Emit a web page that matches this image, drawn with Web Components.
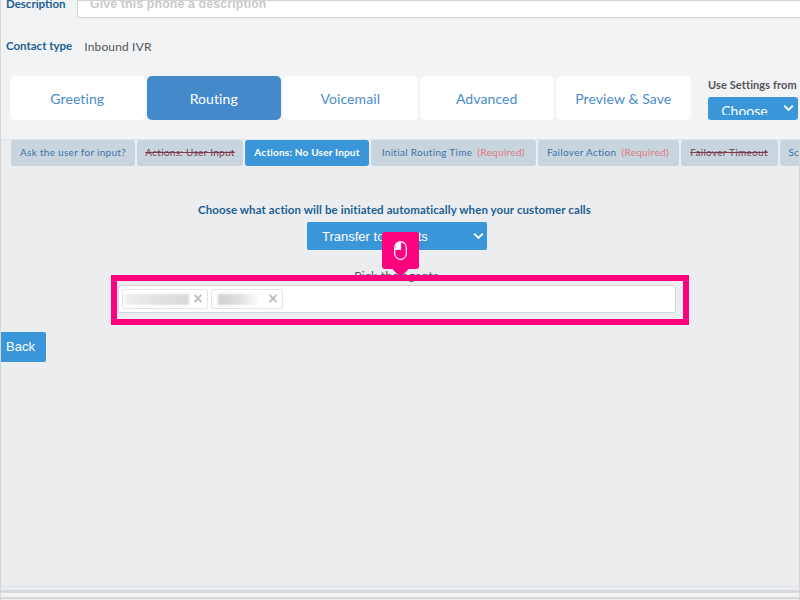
<!DOCTYPE html>
<html>
<head>
<meta charset="utf-8">
<style>
  html, body { margin: 0; padding: 0; }
  body {
    width: 800px;
    height: 600px;
    overflow: hidden;
    position: relative;
    background: #f2f3f5;
    font-family: "Lato", "Liberation Sans", sans-serif;
  }
</style>
</head>
<body>
<form-head></form-head>
<step-tabs>
  <step-tab>Greeting</step-tab>
  <step-tab active>Routing</step-tab>
  <step-tab>Voicemail</step-tab>
  <step-tab>Advanced</step-tab>
  <step-tab>Preview &amp; Save</step-tab>
</step-tabs>
<routing-panel>
  <sub-tabs>
    <sub-tab style="width:124px">Ask the user for input?</sub-tab>
    <sub-tab style="width:106px" state="off">Actions: User Input</sub-tab>
    <sub-tab style="width:124px" state="on">Actions: No User Input</sub-tab>
    <sub-tab style="width:164.500px" required>Initial Routing Time</sub-tab>
    <sub-tab style="width:141px" required>Failover Action</sub-tab>
    <sub-tab style="width:97px" state="off">Failover Timeout</sub-tab>
    <sub-tab style="width:60px">Schedule</sub-tab>
  </sub-tabs>
  <agent-picker></agent-picker>
</routing-panel>
<guide-highlight></guide-highlight>

<script>
const chevron = `<svg width="11" height="8" viewBox="0 0 11 8"><path d="M1.2 1.6 5.5 5.9 9.8 1.6" fill="none" stroke="#fff" stroke-width="2"/></svg>`;

class FormHead extends HTMLElement {
  constructor() {
    super();
    this.attachShadow({ mode: "open" }).innerHTML = `
      <style>
        :host { display: block; height: 76px; border-left: 1px solid #d5d6d8; box-sizing: border-box; }
        .row { display: flex; align-items: flex-end; height: 18px; padding-left: 5px; }
        .label { width: 71px; font-size: 11.5px; font-weight: 700; color: #1c5f94; line-height: 14px; }
        .desc .label { padding-bottom: 7px; }
        .input {
          flex: 1; height: 18px; box-sizing: border-box;
          background: #fff; border: 1px solid #d3d4d6; border-right: 0; border-radius: 0 0 0 3px;
          font: 700 12.300px "Liberation Sans", sans-serif; color: #c9cacc;
          padding: 0 0 0 12px; line-height: 14px; overflow: hidden;
        }
        .input span { display: block; margin-top: -4px; letter-spacing: .15px; }
        .contact { margin-top: 20px; height: 16px; align-items: center; }
        .value { font-size: 12px; color: #555; letter-spacing: .15px; margin-left: 12px; }
        .contact .label { width: auto; }
      </style>
      <div class="row desc"><div class="label">Description</div><div class="input"><span>Give this phone a description</span></div></div>
      <div class="row contact"><div class="label">Contact type</div><div class="value">Inbound IVR</div></div>`;
  }
}

class StepTabs extends HTMLElement {
  constructor() {
    super();
    this.attachShadow({ mode: "open" }).innerHTML = `
      <style>
        :host { display: flex; height: 63px; padding-left: 9px; box-sizing: border-box; border-left: 1px solid #d5d6d8; }
        .tabs { display: flex; gap: 2px; height: 44px; }
        .settings { margin-left: 17.500px; width: 91px; white-space: nowrap; }
        .settings b { display: block; font-size: 11px; line-height: 14px; margin-top: 2px; color: #555; letter-spacing: .1px; }
        .select {
          margin-top: 5px; height: 23px; width: 90px; background: #3a96d8; border-radius: 3px;
          position: relative; color: #fff; font-size: 14px; text-align: center;
          padding-right: 17px; box-sizing: border-box;
        }
        .clip { height: 18px; overflow: hidden; line-height: 28px; }
        .select svg { position: absolute; right: 4px; top: 7px; }
      </style>
      <div class="tabs"><slot></slot></div>
      <div class="settings"><b>Use Settings from</b><div class="select"><div class="clip">Choose</div>${chevron}</div></div>`;
  }
}

class StepTab extends HTMLElement {
  constructor() {
    super();
    this.attachShadow({ mode: "open" }).innerHTML = `
      <style>
        :host {
          display: flex; align-items: center; justify-content: center;
          width: 134.500px; height: 44px; background: #fff; border-radius: 5px;
          color: #4a8ccb; font-size: 14px; letter-spacing: .1px;
        }
        :host([active]) { background: #448acb; color: #fff; }
      </style>
      <slot></slot>`;
  }
}

class RoutingPanel extends HTMLElement {
  constructor() {
    super();
    this.attachShadow({ mode: "open" }).innerHTML = `
      <style>
        :host {
          display: block; height: 461px; box-sizing: border-box; position: relative;
          background: #ecedef; border-top: 1px solid #e2e3e5; border-left: 1px solid #d5d6d8; border-right: 1px solid #d5d6d8;
        }
        .title { margin-top: 37px; padding-right: 11px; text-align: center; font-size: 11.5px; font-weight: 700; color: #1c5f94; letter-spacing: .1px; line-height: 14px; }
        .pick { display: flex; justify-content: center; margin-top: 5px; padding-right: 6px; }
        .select {
          width: 180px; height: 28px; background: #3a96d8; border-radius: 2px; color: #fff; position: relative;
          font: 13px/29px "Liberation Sans", sans-serif; padding-left: 15px; box-sizing: border-box;
        }
        .select svg { position: absolute; right: 3px; top: 10px; }
        .agents { margin-top: 19px; padding-right: 7px; text-align: center; font-size: 12px; line-height: 14px; color: #555; letter-spacing: .3px; }
        .picker { margin: 2px 123px 0 117px; }
        .back {
          display: block; margin-top: 19px; width: 45px; height: 30px; background: #3a96d8; border-radius: 0 2px 2px 0; color: #fff;
          font: 13px/30px "Liberation Sans", sans-serif; padding-left: 5px; box-sizing: border-box;
        }
        .foot { position: absolute; left: 0; right: 0; bottom: 0; height: 14px; background: #ecedef; }
        .foot i { display: block; height: 1px; background: #e0e4ea; }
        .foot u { display: block; height: 3px; margin-top: 3px; background: #d9dadb; }
        .foot s { display: block; height: 4px; background: #f1f2f2; }
        .foot em { display: block; height: 2px; background: #d5d6d8; }
      </style>
      <slot></slot>
      <div class="title">Choose what action will be initiated automatically when your customer calls</div>
      <div class="pick"><div class="select">Transfer to Agents${chevron}</div></div>
      <div class="agents">Pick the agents</div>
      <div class="picker"><slot name="picker"></slot></div>
      <div class="back">Back</div>
      <div class="foot"><i></i><u></u><s></s><em></em></div>`;
  }
  connectedCallback() {
    const picker = this.querySelector("agent-picker");
    if (picker) picker.slot = "picker";
  }
}

class SubTabs extends HTMLElement {
  constructor() {
    super();
    this.attachShadow({ mode: "open" }).innerHTML = `
      <style>
        :host { display: flex; gap: 2px; padding-left: 10px; overflow: hidden; white-space: nowrap; }
      </style>
      <slot></slot>`;
  }
}

class SubTab extends HTMLElement {
  constructor() {
    super();
    this.attachShadow({ mode: "open" }).innerHTML = `
      <style>
        :host {
          display: flex; flex: none; align-items: center; justify-content: center; gap: 5px; height: 26px;
          background: #c8d5df; border-radius: 3px; color: #3b73a8; font-size: 10px; letter-spacing: .3px;
          padding-bottom: 2px; box-sizing: border-box;
        }
        :host([state="off"]) { color: #7c3d48; text-decoration: line-through; }
        :host([state="on"]) { background: #3a96d8; color: #fff; font-weight: 700; letter-spacing: .2px; }
        .req { display: none; color: #dc7a7c; }
        :host([required]) .req { display: inline; }
      </style>
      <span><slot></slot></span><span class="req">(Required)</span>`;
  }
}

class AgentChip extends HTMLElement {
  constructor() {
    super();
    this.attachShadow({ mode: "open" }).innerHTML = `
      <style>
        :host {
          display: flex; align-items: center; height: 20px; box-sizing: border-box; flex: none;
          width: var(--w); border: 1px solid #e4e4e6; border-radius: 2px; background: #fff; padding-left: 2px;
        }
        .blur { flex: 1; height: 11px; background: var(--blur); filter: blur(1px); }
        .x { width: 18px; text-align: center; font: 700 16px/18px "Liberation Sans", sans-serif; color: #bdbdbf; }
      </style>
      <div class="blur"></div><div class="x">×</div>`;
  }
}

class AgentPicker extends HTMLElement {
  constructor() {
    super();
    this.attachShadow({ mode: "open" }).innerHTML = `
      <style>
        :host {
          display: flex; align-items: center; gap: 3px; height: 28px; box-sizing: border-box;
          background: #fff; border: 1px solid #d6d6d9; border-radius: 3px; padding-left: 3px;
        }
      </style>
      <agent-chip style="--w:86px;--blur:linear-gradient(90deg,#f0f0f0,#e4e4e4 40%,#d8d8d8)"></agent-chip>
      <agent-chip style="--w:72px;--blur:linear-gradient(90deg,#fff 6%,#cfcfcf 10%,#e2e2e2 55%,#fff 92%)"></agent-chip>`;
  }
}

class GuideHighlight extends HTMLElement {
  constructor() {
    super();
    this.attachShadow({ mode: "open" }).innerHTML = `
      <style>
        :host { display: block; position: absolute; left: 111px; top: 275px; width: 578px; height: 50px; box-sizing: border-box; border: 6px solid #ff007f; }
        .tip {
          position: absolute; left: 265px; top: -49px; width: 37px; height: 37px;
          background: #ff007f; border-radius: 3px; display: flex; align-items: center; justify-content: center;
        }
        .tip::after {
          content: ""; position: absolute; left: 13px; bottom: -6px; width: 11px; height: 11px;
          background: #ff007f; transform: rotate(45deg);
        }
        svg { position: relative; z-index: 1; }
      </style>
      <div class="tip">
        <svg width="13" height="19" viewBox="0 0 13 19" fill="none" stroke="#fff" stroke-width="1.2">
          <rect x=".7" y=".7" width="11.600" height="17.600" rx="5.800"/>
          <path d="M6.500 1C3.300 1 1.400 3.200 1.400 6V8.500H6.500Z" fill="#fff" stroke="none"/>
          <path d="M.7 8.500H6.500V.7"/>
        </svg>
      </div>`;
  }
}

customElements.define("form-head", FormHead);
customElements.define("step-tabs", StepTabs);
customElements.define("step-tab", StepTab);
customElements.define("routing-panel", RoutingPanel);
customElements.define("sub-tabs", SubTabs);
customElements.define("sub-tab", SubTab);
customElements.define("agent-chip", AgentChip);
customElements.define("agent-picker", AgentPicker);
customElements.define("guide-highlight", GuideHighlight);
</script>
</body>
</html>
